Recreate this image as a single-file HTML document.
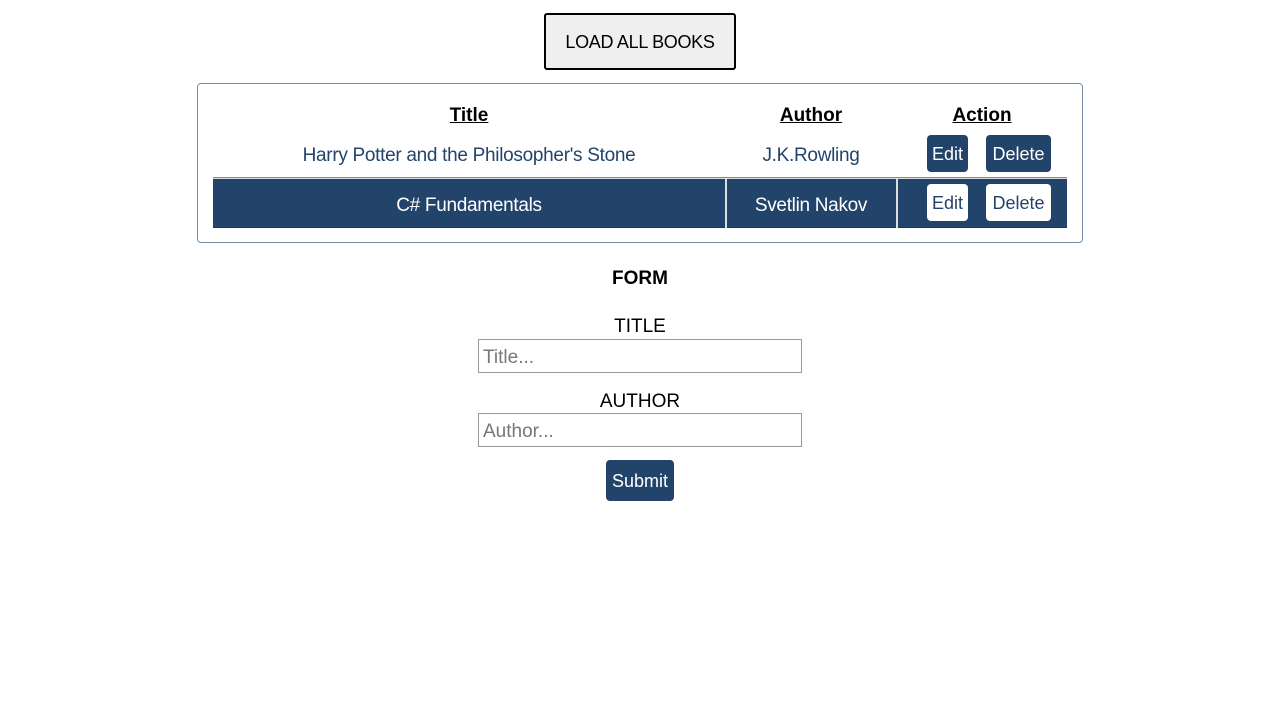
<!DOCTYPE html>
<html><head><style>
body{margin:0;width:1280px;height:720px;background:#fff;font-family:"Liberation Sans",sans-serif;position:relative;overflow:hidden}
.a{position:absolute;box-sizing:border-box}
.c{display:flex;align-items:center;justify-content:center;white-space:nowrap}
.h{font-weight:bold;text-decoration:underline;font-size:19px;color:#000}
.t{color:#23446a;font-size:19px;letter-spacing:-0.3px}
.b{background:#23446a;color:#fff;border-radius:4px;font-size:18px}
.w{background:#fff;color:#23446a;border-radius:4px;font-size:18px}
.in{border:1px solid #999;font-size:19px;color:#777;padding-left:4px;padding-top:3px;display:flex;align-items:center}
</style></head><body>
<div class="a c" style="left:544px;top:13px;width:192px;height:57px;background:#efefef;border:2px solid #000;border-radius:3px;font-size:18px;letter-spacing:-0.3px;padding-top:2px">LOAD ALL BOOKS</div>
<div class="a" style="left:197px;top:83px;width:886px;height:160px;border:1px solid #7a8fa6;border-radius:4px"></div>
<div class="a c h" style="left:214px;top:104px;width:510px;height:24px">Title</div>
<div class="a c h" style="left:727px;top:104px;width:168px;height:24px">Author</div>
<div class="a c h" style="left:898px;top:104px;width:168px;height:24px">Action</div>
<div class="a c t" style="left:214px;top:144px;width:510px;height:24px">Harry Potter and the Philosopher's Stone</div>
<div class="a c t" style="left:727px;top:144px;width:168px;height:24px">J.K.Rowling</div>
<div class="a c b" style="left:927px;top:135px;width:41px;height:37px;padding-top:2px">Edit</div>
<div class="a c b" style="left:986px;top:135px;width:65px;height:37px;padding-top:2px">Delete</div>
<div class="a" style="left:213px;top:177px;width:854px;height:1px;background:#888"></div>
<div class="a" style="left:213px;top:178px;width:854px;height:1px;background:#ddd"></div>
<div class="a" style="left:213px;top:179px;width:854px;height:49px;background:#23446a;border-bottom:1px solid #333"></div>
<div class="a" style="left:725px;top:179px;width:2px;height:49px;background:#ddd"></div>
<div class="a" style="left:896px;top:179px;width:2px;height:49px;background:#ddd"></div>
<div class="a c t" style="left:214px;top:194px;width:510px;height:24px;color:#fff">C# Fundamentals</div>
<div class="a c t" style="left:727px;top:194px;width:168px;height:24px;color:#fff">Svetlin Nakov</div>
<div class="a c w" style="left:927px;top:184px;width:41px;height:37px;padding-top:2px">Edit</div>
<div class="a c w" style="left:986px;top:184px;width:65px;height:37px;padding-top:2px">Delete</div>
<div class="a c" style="left:0;top:267px;width:1280px;height:24px;font-weight:bold;font-size:19px">FORM</div>
<div class="a c" style="left:0;top:315px;width:1280px;height:24px;font-size:19px">TITLE</div>
<div class="a in" style="left:478px;top:339px;width:324px;height:34px">Title...</div>
<div class="a c" style="left:0;top:390px;width:1280px;height:24px;font-size:19px">AUTHOR</div>
<div class="a in" style="left:478px;top:413px;width:324px;height:34px">Author...</div>
<div class="a c b" style="left:606px;top:460px;width:68px;height:41px;padding-top:2px">Submit</div>
</body></html>
